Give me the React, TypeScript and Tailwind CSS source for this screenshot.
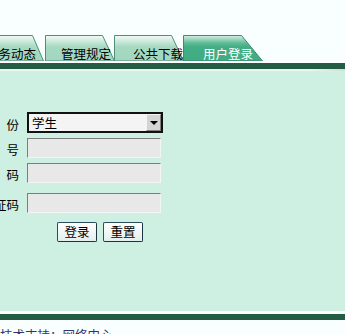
import React from "react";

type TabProps = {
  label: string;
  width: number;
  diag: number;
  active?: boolean;
  cutLeft?: boolean;
  className: string;
};

const Tab: React.FC<TabProps> = ({ label, width, diag, active, cutLeft, className }) => {
  const h = 26;
  const left = cutLeft ? -2 : 0.5;
  const gid = `g-${label}`;
  return (
    <div className={`relative h-[26px] shrink-0 ${className}`}>
      <svg className="absolute inset-0" width={width} height={h} viewBox={`0 0 ${width} ${h}`}>
        <defs>
          <linearGradient id={gid} x1="0" y1="0" x2="0" y2="1">
            {active ? (
              <>
                <stop offset="0" stopColor="#d6efe4" />
                <stop offset="0.3" stopColor="#5dbb95" />
                <stop offset="0.45" stopColor="#41ae85" />
                <stop offset="1" stopColor="#3fac83" />
              </>
            ) : (
              <>
                <stop offset="0" stopColor="#f4fbf7" />
                <stop offset="0.3" stopColor="#bfe4d3" />
                <stop offset="0.45" stopColor="#a6d9c2" />
                <stop offset="1" stopColor="#a2d6bf" />
              </>
            )}
          </linearGradient>
        </defs>
        <polygon
          points={`${left},${h} ${left},0.5 ${width - diag - 0.5},0.5 ${width - 0.5},${h}`}
          fill={`url(#${gid})`}
          stroke={active ? "#3b8d6d" : "#4f8f75"}
          strokeWidth="1"
        />
      </svg>
      <div
        className={`relative flex h-full whitespace-nowrap pt-[12px] text-[12.5px] leading-[14px] ${
          active ? "text-white" : "text-black"
        } ${cutLeft ? "justify-end pr-[8px]" : ""}`}
      >
        {label}
      </div>
    </div>
  );
};

const Field: React.FC<{ label: string; className: string; children: React.ReactNode }> = ({
  label,
  className,
  children,
}) => (
  <div className={`flex items-center ${className}`}>
    <div className="flex w-[19px] shrink-0 justify-end whitespace-nowrap pt-[4px] text-[12.5px] leading-[14px] text-black">
      {label}
    </div>
    <div className="ml-[8px]">{children}</div>
  </div>
);

const inputCls =
  "block h-[20px] w-[134px] border border-t-[#7d7d7d] border-l-[#7d7d7d] border-b-[#f4f4f4] border-r-[#f4f4f4] bg-[#e8e8e8] outline-none";

const btnCls =
  "flex h-[20px] w-[40px] items-center justify-center rounded-[2px] border border-[#2e4d5c] border-b-[#1d3440] border-r-[#1d3440] bg-gradient-to-b from-white to-[#e4eeee] text-[12.5px] leading-[14px] text-black";

const App: React.FC = () => {
  return (
    <div className="h-[334px] w-[345px] overflow-hidden bg-[#f9fffe] font-['Noto_Sans_CJK_SC','Noto_Sans',sans-serif]">
      <div className="h-[35px]" />
      <div className="flex h-[26px]">
        <Tab label="业务动态" width={44} diag={11} cutLeft className="w-[44px]" />
        <Tab label="管理规定" width={70} diag={12} className="ml-[1px] w-[70px] pl-[16px]" />
        <Tab label="公共下载" width={70} diag={12} className="-ml-[1px] w-[70px] pl-[19px]" />
        <Tab label="用户登录" width={80} diag={21} active className="-ml-[1px] w-[80px] pl-[20px]" />
      </div>
      <div className="h-[2px] bg-white" />
      <div className="h-[6px] bg-[#245c46]" />
      <div className="h-[2px] bg-gradient-to-r from-[#e8f7f0] from-90% to-[#d4dcd8]" />
      <div className="h-[240px] bg-[#cdf0e2] pt-[41px]">
        <Field label="身　份" className="h-[21px]">
          <div className="relative h-[21px] w-[136px]">
            <select
              defaultValue="学生"
              className="block h-[21px] w-[136px] appearance-none rounded-none border-2 border-[#111] bg-[#f4f4f4] pl-[3px] text-[12.5px] leading-[14px] text-black outline-none"
            >
              <option>学生</option>
              <option>教师</option>
            </select>
            <div className="pointer-events-none absolute right-[2px] top-[2px] flex h-[17px] w-[15px] items-center justify-center border border-t-[#f4f4f4] border-l-[#f4f4f4] border-b-[#808080] border-r-[#808080] bg-[#d4d4d4]">
              <div className="h-0 w-0 border-x-[4px] border-t-[4px] border-x-transparent border-t-black" />
            </div>
          </div>
        </Field>
        <Field label="学　号" className="mt-[5px] h-[20px]">
          <input className={inputCls} />
        </Field>
        <Field label="密　码" className="mt-[5px] h-[20px]">
          <input type="password" className={inputCls} />
        </Field>
        <Field label="验证码" className="mt-[10px] h-[20px]">
          <input className={inputCls} />
        </Field>
        <div className="ml-[57px] mt-[9px] flex gap-[6px]">
          <button className={btnCls}>登录</button>
          <button className={btnCls}>重置</button>
        </div>
      </div>
      <div className="h-[3px] bg-white" />
      <div className="h-[6px] bg-[#245c46]" />
      <div className="mt-[8px] whitespace-nowrap text-[12.5px] leading-[14px] text-[#34346a]">
        技术支持：网络中心
      </div>
    </div>
  );
};

export default App;
